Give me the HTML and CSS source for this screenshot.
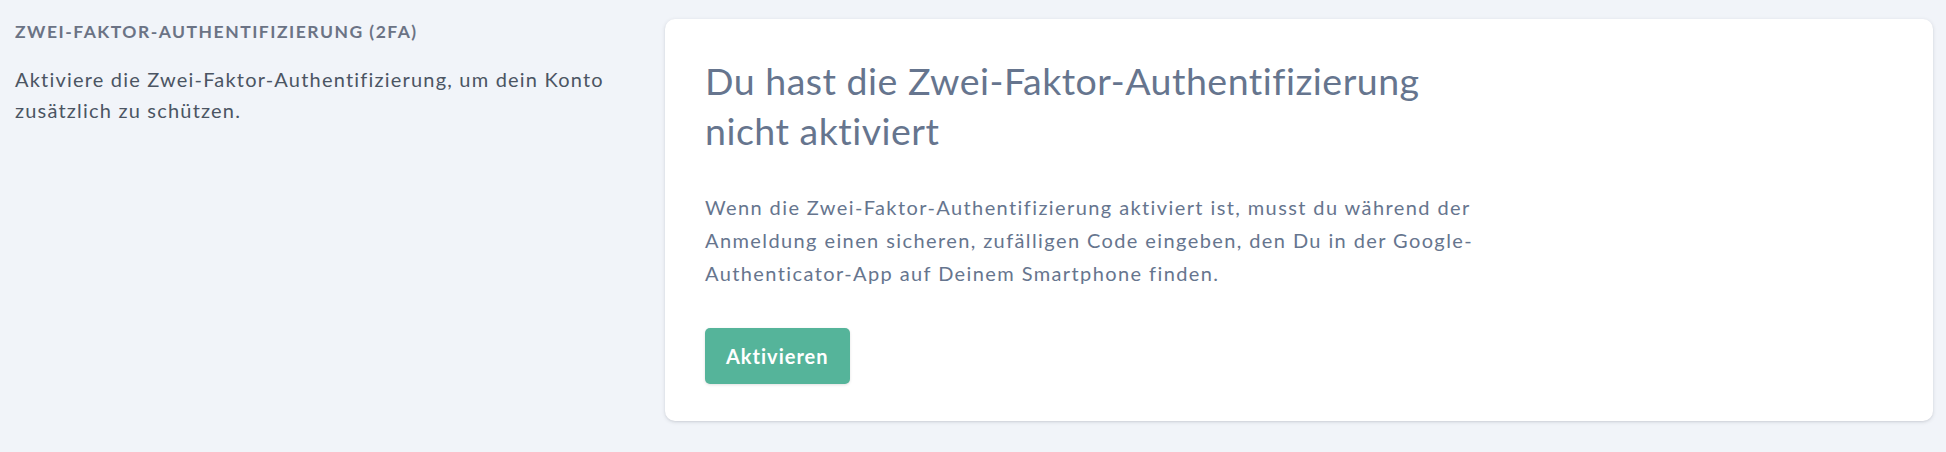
FILE: index.html
```html
<!DOCTYPE html>
<html lang="de">
<head>
<meta charset="utf-8">
<title>Zwei-Faktor-Authentifizierung</title>
<link rel="stylesheet" href="styles.css">
</head>
<body>
<div class="section">
  <div class="section-title">
    <h2 class="eyebrow">Zwei-Faktor-Authentifizierung (2FA)</h2>
    <p class="lead">Aktiviere die Zwei-Faktor-Authentifizierung, um dein Konto zusätzlich zu schützen.</p>
  </div>
  <div class="card">
    <h3 class="card-title">Du hast die Zwei-Faktor-Authentifizierung nicht aktiviert</h3>
    <p class="card-text">Wenn die Zwei-Faktor-Authentifizierung aktiviert ist, musst du während der Anmeldung einen sicheren, zufälligen Code eingeben, den Du in der Google-Authenticator-App auf Deinem Smartphone finden.</p>
    <button class="btn" type="button">Aktivieren</button>
  </div>
</div>
</body>
</html>
```
FILE: styles.css
```css
html, body {
  margin: 0;
  padding: 0;
}
body {
  background: #f1f4f9;
  font-family: "Lato", "Noto Sans", sans-serif;
  width: 1946px;
  height: 452px;
  overflow: hidden;
}
.section {
  display: grid;
  grid-template-columns: repeat(3, minmax(0, 1fr));
  column-gap: 32px;
  padding: 19px 13px 0 15px;
  align-items: start;
}
.section-title {
  grid-column: span 1;
}
.eyebrow {
  margin: 0;
  font-size: 17.5px;
  line-height: 25px;
  font-weight: 700;
  text-transform: uppercase;
  letter-spacing: 1.5px;
  color: #6b7385;
}
.lead {
  margin: 20px 0 0;
  font-size: 20px;
  line-height: 31px;
  letter-spacing: 1.2px;
  color: #4b5563;
}
.card {
  grid-column: span 2;
  background: #fff;
  border-radius: 10px;
  box-shadow: 0 1px 4px rgba(15, 23, 42, 0.12), 0 1px 2px rgba(15, 23, 42, 0.06);
  padding: 37px 40px 37px;
}
.card-title {
  margin: 0;
  max-width: 760px;
  font-size: 37.5px;
  line-height: 50px;
  font-weight: 400;
  letter-spacing: 0.5px;
  color: #66758e;
}
.card-text {
  margin: 35px 0 0;
  max-width: 800px;
  font-size: 20px;
  line-height: 33px;
  letter-spacing: 1.4px;
  color: #66758e;
}
.btn {
  display: block;
  margin-top: 38px;
  height: 56px;
  padding: 0 21px;
  border: 0;
  border-radius: 5px;
  background: #55b49a;
  color: #fff;
  font-family: inherit;
  font-size: 20px;
  font-weight: 700;
  letter-spacing: 1px;
  box-shadow: 0 1px 3px rgba(0, 0, 0, 0.12);
}
```
